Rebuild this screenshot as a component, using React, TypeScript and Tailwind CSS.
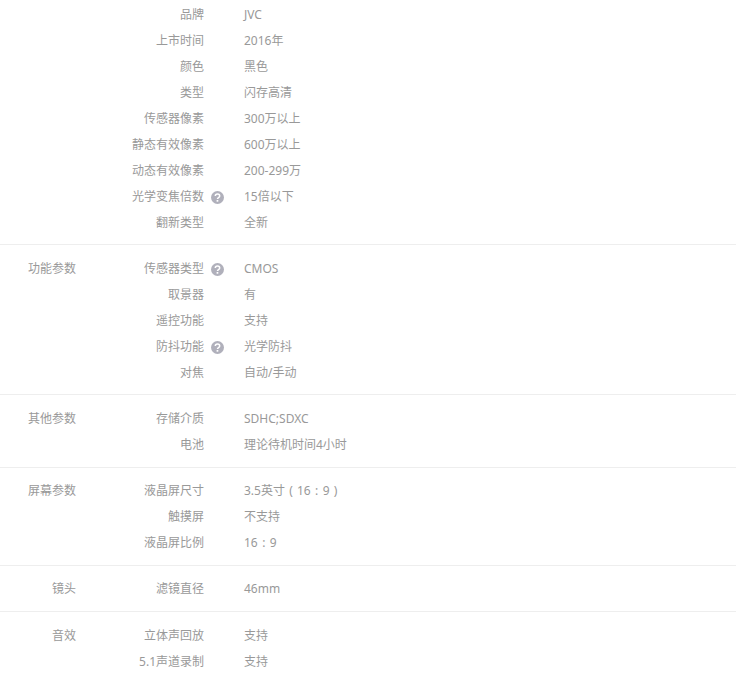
import type { ReactNode } from "react";

const HelpIcon = () => (
  <svg viewBox="0 0 13 13" className="w-[13px] h-[13px] ml-[7px] shrink-0">
    <circle cx="6.5" cy="6.5" r="6.5" fill="#b0b0bb" />
    <path d="M4.3 5.1c0-1.3 1-2 2.2-2s2.2.7 2.2 1.9c0 1.7-2.2 1.6-2.2 3" fill="none" stroke="#fff" strokeWidth="1.5" />
    <rect x="5.6" y="9" width="1.7" height="1.7" fill="#fff" />
  </svg>
);

// full-width punctuation sits centred in its 12px cell here
const Punct = ({ children }: { children: ReactNode }) => (
  <span className="inline-block w-3 text-center">{children}</span>
);

type Row = { name: string; value: ReactNode; help?: boolean };
type Section = { title: string; padding: string; rows: Row[] };

const sections: Section[] = [
  {
    title: "",
    padding: "pt-0.5 pb-2",
    rows: [
      { name: "品牌", value: "JVC" },
      { name: "上市时间", value: "2016年" },
      { name: "颜色", value: "黑色" },
      { name: "类型", value: "闪存高清" },
      { name: "传感器像素", value: "300万以上" },
      { name: "静态有效像素", value: "600万以上" },
      { name: "动态有效像素", value: "200-299万" },
      { name: "光学变焦倍数", value: "15倍以下", help: true },
      { name: "翻新类型", value: "全新" },
    ],
  },
  {
    title: "功能参数",
    padding: "pt-[11px] pb-2",
    rows: [
      { name: "传感器类型", value: "CMOS", help: true },
      { name: "取景器", value: "有" },
      { name: "遥控功能", value: "支持" },
      { name: "防抖功能", value: "光学防抖", help: true },
      { name: "对焦", value: "自动/手动" },
    ],
  },
  {
    title: "其他参数",
    padding: "pt-[11px] pb-[9px]",
    rows: [
      { name: "存储介质", value: "SDHC;SDXC" },
      { name: "电池", value: "理论待机时间4小时" },
    ],
  },
  {
    title: "屏幕参数",
    padding: "pt-2.5 pb-[9px]",
    rows: [
      {
        name: "液晶屏尺寸",
        value: (
          <>
            3.5英寸<Punct>(</Punct>16<Punct>:</Punct>9<Punct>)</Punct>
          </>
        ),
      },
      { name: "触摸屏", value: "不支持" },
      {
        name: "液晶屏比例",
        value: (
          <>
            16<Punct>:</Punct>9
          </>
        ),
      },
    ],
  },
  {
    title: "镜头",
    padding: "pt-2.5 pb-[9px]",
    rows: [{ name: "滤镜直径", value: "46mm" }],
  },
  {
    title: "音效",
    padding: "pt-[11px] pb-2",
    rows: [
      { name: "立体声回放", value: "支持" },
      { name: "5.1声道录制", value: "支持" },
    ],
  },
];

export default function App() {
  return (
    <div className="w-[736px] h-[674px] overflow-hidden bg-white text-xs text-[#999] font-['Noto_Sans','Noto_Sans_CJK_SC',sans-serif]">
      {sections.map((section, i) => (
        <div key={i} className={`flex border-b border-[#eee] last:border-b-0 ${section.padding}`}>
          <div className="w-[76px] shrink-0 text-right leading-[26px]">{section.title}</div>
          <div className="flex-1">
            {section.rows.map((row) => (
              <div key={row.name} className="flex h-[26px] items-center">
                <div className="w-[128px] shrink-0 text-right">{row.name}</div>
                <div className="w-5 shrink-0">{row.help && <HelpIcon />}</div>
                <div className="ml-5">{row.value}</div>
              </div>
            ))}
          </div>
        </div>
      ))}
    </div>
  );
}
